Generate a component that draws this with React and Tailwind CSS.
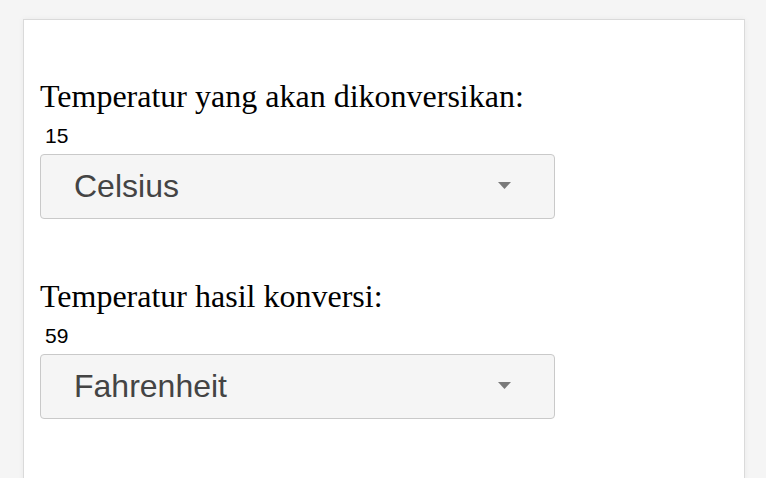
import React from 'react';

const fields = [
    { label: 'Temperatur yang akan dikonversikan:', value: '15', unit: 'Celsius' },
    { label: 'Temperatur hasil konversi:', value: '59', unit: 'Fahrenheit' },
];

function Select({ unit }) {
    return (
        <div className="mt-[7px] flex h-[65px] w-[515px] items-center justify-between rounded-[4px] border border-[#c9c9c9] bg-[#f5f5f5] pb-[2px] pl-[33px] pr-[43px]">
            <span className="font-['Liberation_Sans',Arial,sans-serif] text-[32px] text-[#444]">{unit}</span>
            <svg width="13" height="7" viewBox="0 0 13 7"><path d="M0 0h13L6.5 7z" fill="#7a7a7a" /></svg>
        </div>
    );
}

export default function App() {
    return (
        <div className="h-[478px] overflow-hidden bg-[#f5f5f5] pt-[19px] pl-[23px]">
            <div className="h-[600px] w-[722px] border border-[#dadada] bg-white pl-[16px] pt-[58px] shadow-[0_0_6px_rgba(0,0,0,0.05)]">
                {fields.map((f, i) => (
                    <div key={f.unit} className={i > 0 ? 'mt-[59px]' : ''}>
                        <div className="font-['Liberation_Serif','Times_New_Roman',serif] text-[32px] leading-[36px] text-black">{f.label}</div>
                        <div className="mt-[11px] ml-[5px] font-['Liberation_Sans',Arial,sans-serif] text-[21px] leading-[22px] text-black">{f.value}</div>
                        <Select unit={f.unit} />
                    </div>
                ))}
            </div>
        </div>
    );
}
